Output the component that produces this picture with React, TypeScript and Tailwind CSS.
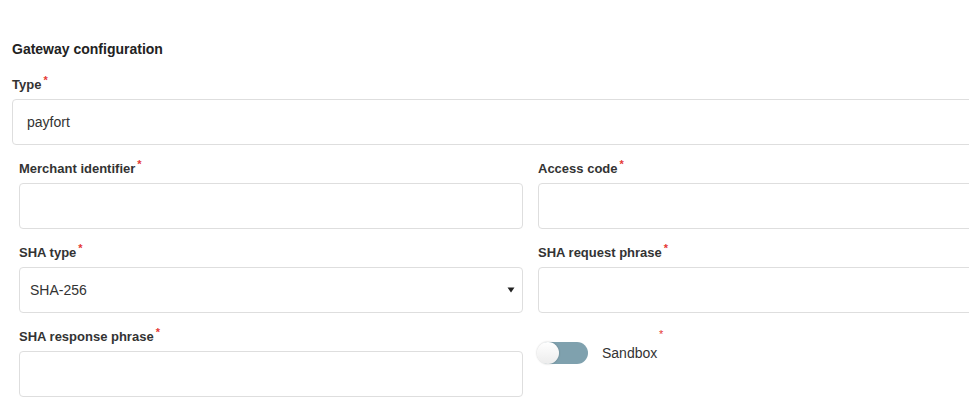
import React from "react";

const font = { fontFamily: '"Liberation Sans", Arial, sans-serif' };

function Req() {
  return <span className="relative -top-[5px] ml-[2px] text-[11px] leading-none text-[#e53935]">*</span>;
}

function Label({ children }: { children: React.ReactNode }) {
  return (
    <label className="mb-[6px] block h-4 text-[13px] font-bold leading-4 text-[#333]">
      {children}
      <Req />
    </label>
  );
}

function TextField({ label, value = "" }: { label: string; value?: string }) {
  return (
    <div className="mb-4">
      <Label>{label}</Label>
      <div className="flex h-[46px] items-center rounded-[4px] border border-[#dedede] bg-white px-[14px] text-[14px] text-[#333]">
        {value}
      </div>
    </div>
  );
}

function SelectField({ label, value }: { label: string; value: string }) {
  return (
    <div className="mb-4">
      <Label>{label}</Label>
      <div className="flex h-[46px] items-center justify-between rounded-[4px] border border-[#dedede] bg-white pl-[10px] pr-[6px] text-[14px] text-[#333]">
        <span>{value}</span>
        <svg width="8" height="6" viewBox="0 0 8 6" className="mr-[1px]">
          <path d="M0.5 0.5h7L4 5.5z" fill="#222" />
        </svg>
      </div>
    </div>
  );
}

function Toggle() {
  return (
    <div className="relative h-[22px] w-[50px] rounded-full bg-[#7fa1ae]">
      <div className="absolute -left-px top-0 h-[22px] w-[22px] rounded-full bg-gradient-to-b from-white to-[#ececec] shadow-[0_0_2px_rgba(0,0,0,0.25)]" />
    </div>
  );
}

export default function App() {
  return (
    <div className="h-[411px] w-[969px] overflow-hidden bg-white" style={font}>
      <div className="w-[1049px] pl-3 pt-[39px]">
        <h2 className="mb-[18px] h-5 text-[14px] font-bold leading-5 text-[#222]">Gateway configuration</h2>
        <TextField label="Type" value="payfort" />
        <div className="grid grid-cols-2 gap-x-[15px] px-[7px]">
          <TextField label="Merchant identifier" />
          <TextField label="Access code" />
          <SelectField label="SHA type" value="SHA-256" />
          <TextField label="SHA request phrase" />
          <TextField label="SHA response phrase" />
          <div className="relative pt-[13px]">
            <div className="flex items-center gap-[14px]">
              <Toggle />
              <span className="text-[14px] text-[#333]">Sandbox</span>
            </div>
            <span className="absolute left-[121px] top-[-3px] text-[11px] text-[#e53935]">*</span>
          </div>
        </div>
      </div>
    </div>
  );
}
